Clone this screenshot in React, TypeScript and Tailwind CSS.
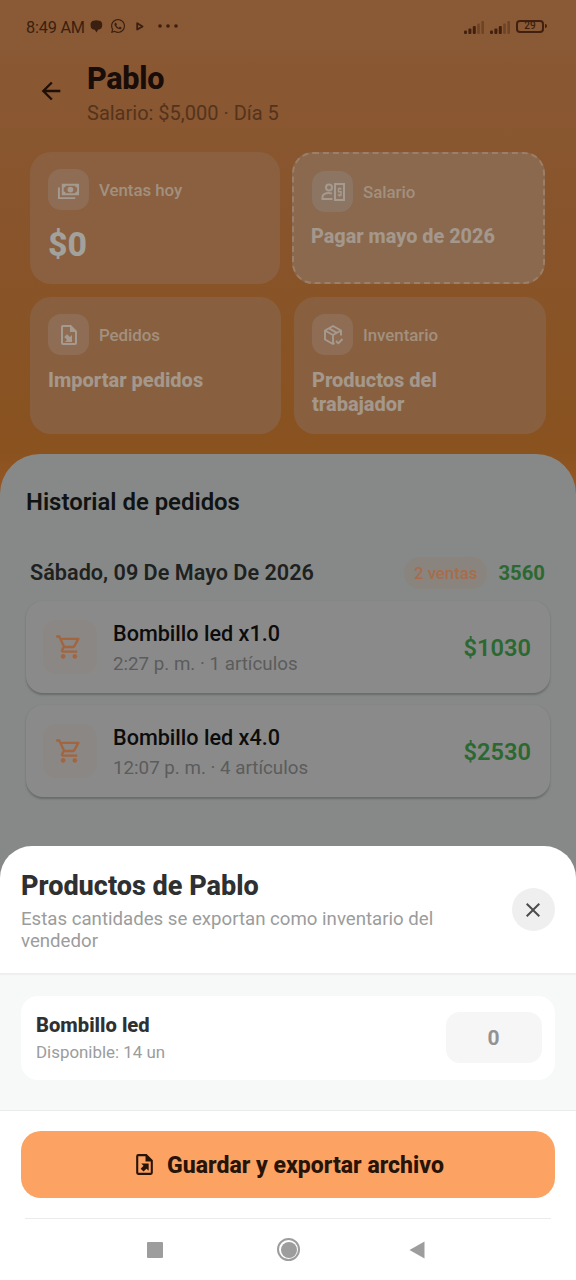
import type { ReactNode } from "react";
import { MdOutlineShoppingCart, MdArrowBack, MdClose } from "react-icons/md";
import { FaWhatsapp } from "react-icons/fa";

const orders = [
  { id: 1, name: "Bombillo led x1.0", detail: "2:27 p. m. · 1 artículos", total: "$1030" },
  { id: 2, name: "Bombillo led x4.0", detail: "12:07 p. m. · 4 artículos", total: "$2530" },
];

const CashIcon = () => (
  <svg viewBox="0 0 24 24" className="size-[23px]" fill="currentColor">
    <path d="M5,6H23V18H5V6M14,9A3,3 0 0,1 17,12A3,3 0 0,1 14,15A3,3 0 0,1 11,12A3,3 0 0,1 14,9M9,8A2,2 0 0,1 7,10V14A2,2 0 0,1 9,16H19A2,2 0 0,1 21,14V10A2,2 0 0,1 19,8H9M1,10H3V20H19V22H1V10Z" />
  </svg>
);

const AccountCashIcon = () => (
  <svg viewBox="0 0 24 24" className="size-6" fill="none" stroke="currentColor" strokeWidth="2">
    <circle cx="8" cy="7.5" r="3" />
    <path d="M11 13.6C10 13.2 8.8 13 7.5 13C4.2 13 1.5 14.6 1.5 16.5V19H11.5" />
    <path d="M14 4H23V20H14Z" />
    <path d="M20.5 8.8H17.5V11.8H20V15H16.8M18.7 7.5V9M18.7 15V16.5" strokeWidth="1.4" />
  </svg>
);

const FileImportIcon = () => (
  <svg viewBox="0 0 24 24" className="size-6" fill="currentColor">
    <path d="M14 2L20 8V20A2 2 0 0 1 18 22H6A2 2 0 0 1 4 20V4A2 2 0 0 1 6 2H14M18 20V9H13V4H6V20H18M15 11.93V19H7.93L10.05 16.88L7.22 14.05L10.05 11.22L12.88 14.05L15 11.93Z" />
  </svg>
);

const FileExportIcon = () => (
  <svg viewBox="0 0 24 24" className="size-[25px]" fill="currentColor">
    <path d="M14,2L20,8V20A2,2 0 0,1 18,22H6A2,2 0 0,1 4,20V4A2,2 0 0,1 6,2H14M18,20V9H13V4H6V20H18M16,11V18.1L13.9,16L11.1,18.8L8.3,16L11.1,13.2L8.9,11H16Z" />
  </svg>
);

const PackageCheckIcon = () => (
  <svg viewBox="0 0 24 24" className="size-6" fill="none" stroke="currentColor" strokeWidth="1.9" strokeLinejoin="round">
    <path d="M20 12.5V7.5L12 3L4 7.5V16.5L12 21L13.5 20.2" />
    <path d="M4 7.5L12 12L20 7.5M12 12V21M8 5.3L16 9.8" />
    <path d="M15 18L17.3 20.3L21.5 16" />
  </svg>
);

const Signal = () => (
  <svg viewBox="0 0 20 13" className="h-[13px] w-5">
    <g fill="#42200f">
      <rect x="0" y="9.5" width="3" height="3.5" rx="1" />
      <rect x="4.4" y="7.5" width="3" height="5.5" rx="1" />
      <rect x="8.8" y="5" width="3" height="8" rx="1" />
    </g>
    <g fill="#6d4426">
      <rect x="13.2" y="2.5" width="2.6" height="10.5" rx="1" />
      <rect x="17.4" y="0" width="2.6" height="13" rx="1" />
    </g>
  </svg>
);

function StatusBar() {
  return (
    <div className="flex h-[54px] items-center pl-[26px] pr-[29px] text-[#3b1f10]">
      <span className="w-[59px] whitespace-nowrap pt-px text-[16.3px] leading-5 tracking-[-0.2px]">8:49 AM</span>
      <svg viewBox="0 0 12 12" className="mb-0.5 ml-[5px] size-[13px]" fill="currentColor">
        <path d="M3 .8C5-.2 7 0 8.5 .8C10.5 1 11.6 2.8 11.2 4.8C11.5 7 9.8 8.7 7.7 8.8L5.9 11.6L4.5 9C2 9 .4 7.5 .7 5.3C0 3.5 1 1.5 3 .8Z" />
      </svg>
      <FaWhatsapp className="mb-0.5 ml-[7px] size-4" />
      <svg viewBox="0 0 8 9" className="mb-0.5 ml-[10px] h-[9px] w-2" fill="none" stroke="currentColor" strokeWidth="1.8" strokeLinejoin="round">
        <path d="M1.2 1.2L6.6 4.4L1.2 7.6Z" />
      </svg>
      <svg viewBox="0 0 20 4" className="mb-0.5 ml-[14px] h-1 w-5" fill="currentColor">
        <circle cx="2" cy="2" r="1.8" />
        <circle cx="10" cy="2" r="1.8" />
        <circle cx="18" cy="2" r="1.8" />
      </svg>
      <div className="ml-auto flex items-center gap-[6px]">
        <Signal />
        <Signal />
        <div className="mb-0.5 flex items-center">
          <div className="flex h-[13px] w-7 items-center justify-center rounded-[4px] border-2 border-[#42200f] text-[10px] font-medium leading-none">29</div>
          <div className="ml-px h-1 w-[2px] rounded-r bg-[#42200f]" />
        </div>
      </div>
    </div>
  );
}

function CardHead({ icon, label, tile = "bg-[#8f6d54]" }: { icon: ReactNode; label: string; tile?: string }) {
  return (
    <div className="flex items-center">
      <div className={`flex size-[41px] items-center justify-center rounded-[13px] text-[#a59a90] ${tile}`}>{icon}</div>
      <span className="ml-[10px] pt-px text-[16.9px] font-medium leading-5 tracking-[-0.05px] text-[#a2907f]">{label}</span>
    </div>
  );
}

function OrderCard({ name, detail, total }: { name: string; detail: string; total: string }) {
  return (
    <div className="flex h-[92px] items-center rounded-[17px] bg-[#8a8a8a] pl-[17px] pr-[19px] shadow-[0_1.5px_2px_rgba(60,70,70,0.42)]">
      <div className="flex size-[54px] items-center justify-center rounded-[14px] bg-[#8b8784] pr-[2px] text-[#a3653f]">
        <MdOutlineShoppingCart className="size-7" />
      </div>
      <div className="ml-4 pt-[3px]">
        <div className="text-[21.6px] font-medium leading-7 text-[#0c0c0c]">{name}</div>
        <div className="mt-[3px] text-[18.75px] leading-[26px] text-[#5b5c5c]">{detail}</div>
      </div>
      <div className="ml-auto pt-px text-[23.6px] font-semibold leading-7 text-[#2c6831]">{total}</div>
    </div>
  );
}

function ProductSheet() {
  return (
    <div className="flex h-[434px] flex-col rounded-t-[32px] bg-white">
      <div className="flex h-[129px] items-center border-b-2 border-[#eeefef] pl-[21px] pr-[21px]">
        <div className="w-[440px] pt-[3px]">
          <div className="text-[27.05px] font-extrabold leading-8 text-[#2f3031]">Productos de Pablo</div>
          <div className="mt-[6px] text-[18.65px] leading-[22px] text-[#9b9c9c]">Estas cantidades se exportan como inventario del vendedor</div>
        </div>
        <button className="ml-auto flex size-[43px] items-center justify-center rounded-full bg-[#efefef] pr-px text-[#4c4c4c]">
          <MdClose className="size-6" />
        </button>
      </div>

      <div className="h-[136px] border-b border-[#e9eaea] bg-[#f7f9f8] px-[21px] pt-[21px]">
        <div className="flex h-[84px] items-center rounded-[17px] bg-white pl-[15px] pr-[13px]">
          <div className="pb-[2px]">
            <div className="text-[20.2px] font-extrabold leading-6 text-[#2f3031]">Bombillo led</div>
            <div className="mt-[5px] text-[16.9px] leading-5 text-[#9b9c9c]">Disponible: 14 un</div>
          </div>
          <div className="mb-[2px] ml-auto flex h-[51px] w-24 items-center justify-center rounded-[14px] bg-[#f6f6f6] pr-px pt-[3px] text-[21px] font-bold text-[#929292]">0</div>
        </div>
      </div>

      <div className="px-[21px] pt-5">
        <button className="flex h-[67px] w-full items-center justify-center rounded-[20px] bg-[#fca263] text-[#281407]">
          <FileExportIcon />
          <span className="ml-[10px] pt-[3px] text-[23.05px] font-extrabold leading-7">Guardar y exportar archivo</span>
        </button>
        <div className="mx-1 mt-5 h-px bg-[#ebebeb]" />
      </div>

      <div className="flex h-[61px] items-center pl-[147px]">
        <div className="size-4 rounded-[1px] bg-[#9d9d9d]" />
        <div className="ml-[114px] flex size-[23px] items-center justify-center rounded-full border-2 border-[#9d9d9d]">
          <div className="size-4 rounded-full bg-[#9d9d9d]" />
        </div>
        <svg viewBox="0 0 16 18" className="ml-[109px] h-[18px] w-4" fill="#9d9d9d">
          <path d="M.5 9L15.5 .5V17.5Z" />
        </svg>
      </div>
    </div>
  );
}

export default function App() {
  return (
    <div className="flex h-[1280px] w-[576px] flex-col overflow-hidden bg-[#868988] font-['Roboto',sans-serif]">
      <div className="flex h-[846px] flex-col bg-[linear-gradient(180deg,#8a5a37_0px,#88542b_220px,#89521f_450px,#985824_500px)]">
        <StatusBar />

        <div className="flex h-[98px] pl-[37px]">
          <MdArrowBack className="mt-[23px] size-7 text-[#1f0f07]" />
          <div className="ml-[22px] pt-[7px]">
            <div className="text-[30.6px] font-extrabold leading-9 tracking-[-0.3px] text-[#180d08]">Pablo</div>
            <div className="mt-[3px] text-[20px] leading-[26px] text-[#54331d]">Salario: $5,000 · Día 5</div>
          </div>
        </div>

        <div className="flex pl-[30px]">
          <div className="h-[132px] w-[250px] rounded-[21px] bg-[#8a6040] pl-[18px] pt-[17px]">
            <CardHead icon={<CashIcon />} label="Ventas hoy" />
            <div className="mt-[15px] text-[33.8px] font-extrabold leading-10 text-[#a2a19b]">$0</div>
          </div>
          <div className="ml-3 h-[132px] w-[253px] rounded-[21px] border-2 border-dashed border-[#9d7f68] bg-[#8a694e] pl-[17px] pt-[17px]">
            <div className="pl-px">
              <CardHead icon={<AccountCashIcon />} label="Salario" tile="bg-[#8c7562]" />
            </div>
            <div className="mt-[13px] text-[19.85px] font-extrabold leading-6 text-[#a4978b]">Pagar mayo de 2026</div>
          </div>
        </div>

        <div className="mt-[13px] flex pl-[30px]">
          <div className="h-[137px] w-[251px] rounded-[21px] bg-[#89603f] pl-[18px] pt-[17px]">
            <CardHead icon={<FileImportIcon />} label="Pedidos" />
            <div className="mt-[14px] text-[20px] font-extrabold leading-[23.5px] text-[#a4978b]">Importar pedidos</div>
          </div>
          <div className="ml-[13px] h-[137px] w-[252px] rounded-[21px] bg-[#89603f] pl-[18px] pt-[17px]">
            <CardHead icon={<PackageCheckIcon />} label="Inventario" />
            <div className="mt-[14px] w-[170px] text-[20px] font-extrabold leading-[23.5px] text-[#a4978b]">Productos del trabajador</div>
          </div>
        </div>

        <div className="mt-5 flex-1 rounded-t-[40px] bg-[#868988] px-[26px] pt-[34px]">
          <div className="text-[23.9px] font-semibold leading-7 text-[#111313]">Historial de pedidos</div>
          <div className="mt-[40px] flex h-[34px] items-center pl-1 pr-[5px]">
            <span className="text-[21.65px] font-semibold leading-7 text-[#1f2121]">Sábado, 09 De Mayo De 2026</span>
            <span className="ml-auto rounded-full bg-[#8a847f] px-[10px] py-1 text-[16.8px] font-medium leading-6 text-[#a56d4c]">2 ventas</span>
            <span className="ml-[11px] text-[20.3px] font-bold leading-7 text-[#2c6831]">3560</span>
          </div>
          <div className="mt-[11px] flex flex-col gap-3">
            {orders.map((o) => (
              <OrderCard key={o.id} name={o.name} detail={o.detail} total={o.total} />
            ))}
          </div>
        </div>
      </div>

      {/* sheet corners show the dimmed page behind */}
      <div className="bg-[#868988]">
        <ProductSheet />
      </div>
    </div>
  );
}
